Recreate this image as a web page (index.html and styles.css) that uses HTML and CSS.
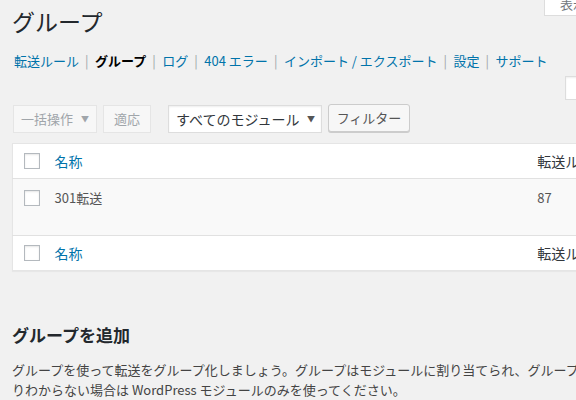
FILE: index.html
```html
<!DOCTYPE html>
<html lang="ja">
<head>
<meta charset="utf-8">
<title>グループ</title>
<link rel="stylesheet" href="styles.css">
</head>
<body>
<div class="wrap">
  <header class="head">
    <h1 class="title">グループ</h1>
    <div class="screen-tab"><span class="screen-tab-text">表示オプション ▾</span></div>
  </header>

  <ul class="subnav">
    <li><a href="#">転送ルール</a><span class="sep">|</span></li>
    <li><span class="current">グループ</span><span class="sep">|</span></li>
    <li><a href="#">ログ</a><span class="sep">|</span></li>
    <li><a href="#">404 エラー</a><span class="sep">|</span></li>
    <li><a href="#">インポート / エクスポート</a><span class="sep">|</span></li>
    <li><a href="#">設定</a><span class="sep">|</span></li>
    <li><a href="#">サポート</a></li>
  </ul>

  <div class="search-row">
    <input class="search" type="text" aria-label="検索">
  </div>

  <div class="tablenav">
    <div class="select disabled bulk"><span>一括操作</span><span class="arrow">▼</span></div>
    <div class="btn disabled apply">適応</div>
    <div class="select module"><span>すべてのモジュール</span><span class="arrow">▼</span></div>
    <div class="btn filter">フィルター</div>
  </div>

  <table class="groups">
    <colgroup>
      <col class="c-check">
      <col class="c-name">
      <col class="c-rules">
    </colgroup>
    <thead>
      <tr>
        <td class="check"><span class="cb"></span></td>
        <th class="name"><a href="#">名称</a></th>
        <th class="rules">転送ルール</th>
      </tr>
    </thead>
    <tbody>
      <tr>
        <td class="check"><span class="cb"></span></td>
        <td class="name">301転送</td>
        <td class="rules">87</td>
      </tr>
    </tbody>
    <tfoot>
      <tr>
        <td class="check"><span class="cb"></span></td>
        <th class="name"><a href="#">名称</a></th>
        <th class="rules">転送ルール</th>
      </tr>
    </tfoot>
  </table>

  <h2 class="add-title">グループを追加</h2>
  <p class="desc">グループを使って転送をグループ化しましょう。グループはモジュールに割り当てられ、グループ内の転送に影響します。はっき<br>りわからない場合は WordPress モジュールのみを使ってください。</p>
</div>
</body>
</html>
```

FILE: styles.css
```css
html, body {
  margin: 0;
  padding: 0;
}
body {
  background: #f1f1f1;
  color: #444;
  font-family: "Noto Sans CJK JP", "Noto Sans", sans-serif;
  font-size: 13px;
  overflow: hidden;
  width: 576px;
  height: 400px;
}
.wrap {
  width: 576px;
  box-sizing: border-box;
  padding-left: 12px;
}

/* header */
.head {
  display: flex;
  align-items: flex-start;
  justify-content: space-between;
  height: 36px;
}
.title {
  margin: 0;
  padding-top: 7px;
  font-size: 23px;
  line-height: 29px;
  font-weight: 400;
  color: #23282d;
}
.screen-tab {
  width: 90px;
  height: 16px;
  margin-right: -58px;
  box-sizing: border-box;
  background: #fff;
  border: 1px solid #ddd;
  border-top: none;
  padding-left: 15px;
  overflow: hidden;
  color: #72777c;
  font-size: 13px;
  line-height: 8px;
  white-space: nowrap;
}

/* sub navigation */
.subnav {
  list-style: none;
  margin: 12px 0 0 2px;
  padding: 0;
  display: flex;
  flex-wrap: nowrap;
  white-space: nowrap;
  line-height: 26px;
  color: #666;
}
.subnav a {
  color: #0073aa;
  text-decoration: none;
}
.subnav .current {
  color: #000;
  font-weight: 700;
}
.subnav .sep {
  color: #a0a5aa;
  padding: 0 6.5px 0 6px;
}

/* search */
.search-row {
  display: flex;
  justify-content: flex-end;
  margin-top: 2px;
}
.search {
  width: 60px;
  height: 24px;
  margin: 0 -49px 0 0;
  box-sizing: border-box;
  border: 1px solid #ddd;
  background: #fff;
  box-shadow: inset 0 1px 2px rgba(0,0,0,.07);
  padding: 0;
}

/* tablenav */
.tablenav {
  display: flex;
  align-items: flex-start;
  margin-top: 5px;
  padding-left: 1px;
  height: 28px;
}
.select, .btn {
  box-sizing: border-box;
  height: 28px;
  line-height: 26px;
  white-space: nowrap;
}
.select {
  display: flex;
  justify-content: space-between;
  background: #fff;
  border: 1px solid #ddd;
  box-shadow: inset 0 1px 2px rgba(0,0,0,.07);
  color: #32373c;
  font-size: 14px;
}
.select .arrow {
  font-size: 8px;
  color: #555;
}
.bulk {
  width: 84px;
  padding: 0 7px 0 7px;
  background: #f7f7f7;
  border-color: #e5e5e5;
  box-shadow: none;
  color: #a0a5aa;
  font-size: 13px;
}
.bulk .arrow {
  color: #a0a5aa;
}
.apply {
  width: 48px;
  margin-left: 6px;
  text-align: center;
  background: #f7f7f7;
  border: 1px solid #e5e5e5;
  color: #a0a5aa;
  font-size: 13px;
}
.module {
  width: 154px;
  margin-left: 17px;
  padding: 0 6px 0 7px;
}
.filter {
  width: 82px;
  margin-left: 6px;
  margin-top: -1px;
  text-align: center;
  background: #f7f7f7;
  border: 1px solid #ccc;
  border-radius: 3px;
  box-shadow: 0 1px 0 #ccc;
  color: #555;
  font-size: 13px;
}

/* table */
.groups {
  margin-top: 10px;
  table-layout: fixed;
  border-collapse: collapse;
  width: 666px;
  background: #fff;
  border: 1px solid #e5e5e5;
  box-shadow: 0 1px 1px rgba(0,0,0,.04);
}
.c-check { width: 32px; }
.c-name { width: 482px; }
.c-rules { width: 150px; }
.groups th, .groups td {
  padding: 0 10px;
  text-align: left;
  font-weight: 400;
  white-space: nowrap;
  overflow: hidden;
}
.groups thead tr, .groups tfoot tr {
  height: 35px;
}
.groups thead tr {
  border-bottom: 1px solid #e1e1e1;
}
.groups tfoot tr {
  border-top: 1px solid #e1e1e1;
}
.groups th {
  font-size: 14px;
  color: #32373c;
}
.groups th a {
  color: #0073aa;
  text-decoration: none;
}
.groups td.check, .groups th.check {
  padding: 0 0 0 11px;
}
.groups thead .check, .groups tfoot .check {
  vertical-align: middle;
}
.cb {
  display: block;
  width: 16px;
  height: 16px;
  box-sizing: border-box;
  border: 1px solid #b4b9be;
  background: #fff;
  box-shadow: inset 0 1px 2px rgba(0,0,0,.1);
}
.groups tbody tr {
  height: 57px;
  background: #f9f9f9;
}
.groups tbody td {
  vertical-align: top;
  padding-top: 8px;
  color: #555;
  font-size: 13px;
  line-height: 22px;
}
.groups tbody td.check {
  padding-top: 11px;
}

/* add group */
.add-title {
  margin: 52px 0 0;
  font-size: 17px;
  line-height: 24px;
  font-weight: 700;
  color: #23282d;
}
.desc {
  margin: 13px 0 0;
  line-height: 19.5px;
  white-space: nowrap;
  color: #444;
}
```
